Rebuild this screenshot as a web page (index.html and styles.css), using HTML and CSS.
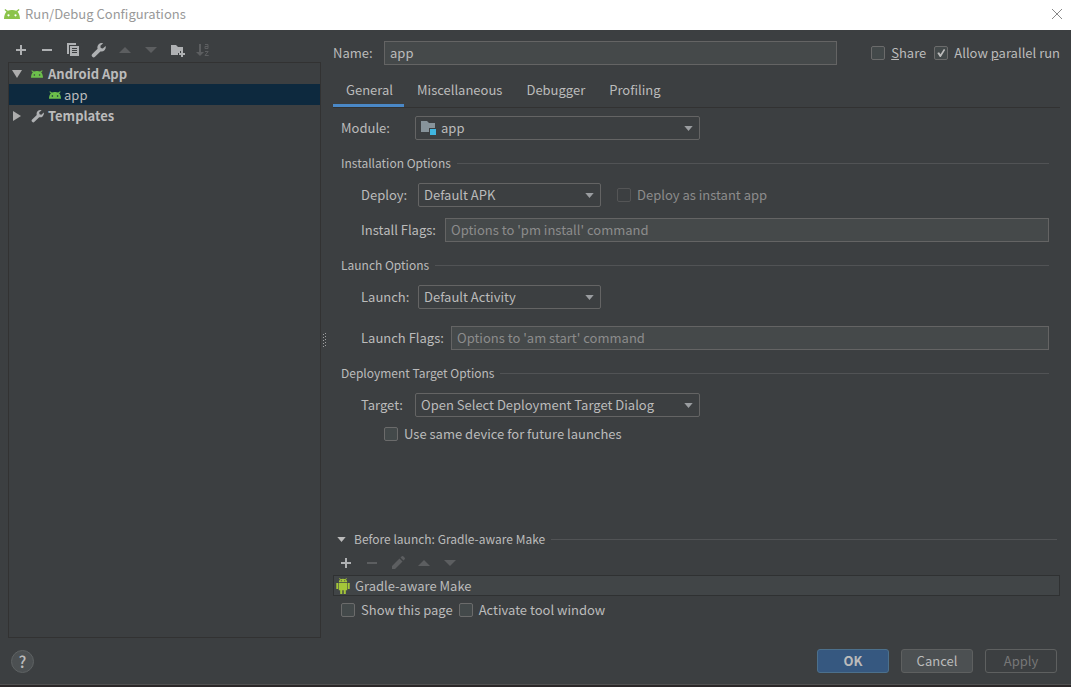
FILE: index.html
```html
<!DOCTYPE html>
<html lang="en">
<head>
<meta charset="utf-8">
<title>Run/Debug Configurations</title>
<link rel="stylesheet" href="styles.css">
</head>
<body>
<svg class="defs" aria-hidden="true">
  <symbol id="head" viewBox="0 0 16 10"><path fill-rule="evenodd" d="M1.200 0l2.600 1.800A9 9 0 0 1 8 1a9 9 0 0 1 4.200.8L14.800 0l.7.900-2 1.900C15 4.200 15.900 6.700 16 10H0c.1-3.300 1-5.800 2.500-7.200L.5.900zM4.500 5.200a1.100 1.100 0 1 0 0 2.200 1.100 1.100 0 0 0 0-2.200zm7 0a1.100 1.100 0 1 0 0 2.200 1.100 1.100 0 0 0 0-2.200z"/></symbol>
  <symbol id="plus" viewBox="0 0 16 16"><path d="M7 3h2v4h4v2H9v4H7V9H3V7h4z"/></symbol>
  <symbol id="minus" viewBox="0 0 16 16"><path d="M3 7h10v2H3z"/></symbol>
  <symbol id="up" viewBox="0 0 16 16"><path d="M8 5l6 6H2z"/></symbol>
  <symbol id="down" viewBox="0 0 16 16"><path d="M8 11L2 5h12z"/></symbol>
  <symbol id="wrench" viewBox="0 0 16 16"><path d="M14.600 4l-2.800 2.500-2.100-.5-.3-2.200L12.200 1.300a4.400 4.400 0 0 0-5.600 5.500L1.300 12a1.900 1.900 0 0 0 0 2.700 1.900 1.900 0 0 0 2.700 0l5.400-5.300A4.400 4.400 0 0 0 14.600 4z"/></symbol>
  <symbol id="caret" viewBox="0 0 10 6"><path d="M0 0h10L5 6z"/></symbol>
</svg>
<div class="dialog">
  <header class="titlebar">
    <svg class="title-icon" aria-hidden="true"><use href="#head"/></svg>
    <h1>Run/Debug Configurations</h1>
    <button class="close" aria-label="Close"><svg viewBox="0 0 12 12" aria-hidden="true"><path d="M1 1l10 10M11 1L1 11"/></svg></button>
  </header>

  <main class="main">
    <nav class="sidebar" aria-label="Configurations">
      <div class="toolbar">
        <button aria-label="Add"><svg><use href="#plus"/></svg></button>
        <button aria-label="Remove"><svg><use href="#minus"/></svg></button>
        <button aria-label="Copy"><svg viewBox="0 0 16 16"><path d="M2 1h9v2H4v9H2z"/><path fill-rule="evenodd" d="M5 4h9v10H5zM7 6v1h5V6zm0 2v1h5V8zm0 2v1h5v-1z"/></svg></button>
        <button aria-label="Edit templates"><svg><use href="#wrench"/></svg></button>
        <button aria-label="Move up" disabled><svg><use href="#up"/></svg></button>
        <button aria-label="Move down" disabled><svg><use href="#down"/></svg></button>
        <button aria-label="New folder"><svg viewBox="0 0 16 16"><path d="M2 3h5l2 2h5v4h-3v2H9v2H2z"/><path d="M12 9h2v2h2v2h-2v2h-2v-2h-2v-2h2z"/></svg></button>
        <button aria-label="Sort" disabled><svg viewBox="0 0 16 16"><path d="M4 2h2v8h3l-4 4-4-4h3z"/><path class="line" d="M10 2.500h3v4h-3v-2h3M10 9.500h3.200l-3.200 4h3.700"/></svg></button>
      </div>
      <ul class="tree">
        <li class="node group"><svg class="twist" viewBox="0 0 10 10"><path d="M0 1h10L5 9z"/></svg><svg class="node-head"><use href="#head"/></svg>Android App</li>
        <li class="node child selected"><svg class="node-head"><use href="#head"/></svg>app</li>
        <li class="node group"><svg class="twist" viewBox="0 0 10 10"><path d="M1 0l8 5-8 5z"/></svg><svg class="node-wrench"><use href="#wrench"/></svg>Templates</li>
      </ul>
    </nav>

    <div class="splitter"><svg viewBox="0 0 4 14" aria-hidden="true"><path d="M2.500 0v14M.5 1v13"/></svg></div>

    <section class="content">
      <div class="name-row">
        <label for="name">Name:</label>
        <input class="field" id="name" type="text" value="app">
        <div class="name-checks">
          <label class="check"><input type="checkbox"><span><u>S</u>hare</span></label>
          <label class="check"><input type="checkbox" checked><span>Allow <u>p</u>arallel run</span></label>
        </div>
      </div>

      <div class="tabs" role="tablist">
        <button role="tab" aria-selected="true">General</button>
        <button role="tab" aria-selected="false">Miscellaneous</button>
        <button role="tab" aria-selected="false">Debugger</button>
        <button role="tab" aria-selected="false">Profiling</button>
      </div>

      <form class="form">
        <div class="row">
          <label class="module-label" for="module">Module:</label>
          <div class="select wide with-icon">
            <select id="module"><option>app</option></select>
            <svg class="folder" viewBox="0 0 16 14" aria-hidden="true"><path d="M0 0h6l2 2h6v5H8v4H0z"/><path class="badge" d="M9 8h6v6H9z"/></svg>
            <svg class="caret" aria-hidden="true"><use href="#caret"/></svg>
          </div>
        </div>

        <h2>Installation Options</h2>
        <div class="row indent">
          <label class="short-label" for="deploy">Deploy:</label>
          <div class="select">
            <select id="deploy"><option>Default APK</option></select>
            <svg class="caret" aria-hidden="true"><use href="#caret"/></svg>
          </div>
          <label class="check instant"><input type="checkbox" disabled><span>Deploy as instant app</span></label>
        </div>
        <div class="row indent">
          <label class="install-label" for="install-flags">Install Flags:</label>
          <input class="field grow" id="install-flags" type="text" placeholder="Options to 'pm install' command">
        </div>

        <h2>Launch Options</h2>
        <div class="row indent">
          <label class="short-label" for="launch">Launch:</label>
          <div class="select">
            <select id="launch"><option>Default Activity</option></select>
            <svg class="caret" aria-hidden="true"><use href="#caret"/></svg>
          </div>
        </div>
        <div class="row indent spaced">
          <label class="launch-label" for="launch-flags">Launch Flags:</label>
          <input class="field grow" id="launch-flags" type="text" placeholder="Options to 'am start' command">
        </div>

        <h2>Deployment Target Options</h2>
        <div class="row indent">
          <label class="target-label" for="target">Target:</label>
          <div class="select wide">
            <select id="target"><option>Open Select Deployment Target Dialog</option></select>
            <svg class="caret" aria-hidden="true"><use href="#caret"/></svg>
          </div>
        </div>
        <label class="check same-device"><input type="checkbox"><span>Use same device for future launches</span></label>
      </form>

      <div class="before">
        <h2><svg class="fold" aria-hidden="true"><use href="#caret"/></svg>Before launch: Gradle-aware Make</h2>
        <div class="toolbar">
          <button aria-label="Add task"><svg><use href="#plus"/></svg></button>
          <button aria-label="Remove task" disabled><svg><use href="#minus"/></svg></button>
          <button aria-label="Edit task" disabled><svg viewBox="0 0 16 16"><path d="M2 11L9.500 3.500l3 3L5 14H2zM10.500 2.500l1.300-1.200a1 1 0 0 1 1.400 0l1.500 1.500a1 1 0 0 1 0 1.400l-1.200 1.300z"/></svg></button>
          <button aria-label="Move task up" disabled><svg><use href="#up"/></svg></button>
          <button aria-label="Move task down" disabled><svg><use href="#down"/></svg></button>
        </div>
        <ul class="tasks">
          <li><svg class="robot" viewBox="0 0 14 16" aria-hidden="true"><path fill-rule="evenodd" d="M3.800 0l.9 1.300a5 5 0 0 1 4.600 0L10.200 0l.6.400-.8 1.400c.8.6 1.200 1.400 1.200 2.400H2.800c0-1 .4-1.800 1.200-2.400L3.200.4zM4.800 2.300v1h1v-1zm3.400 0v1h1v-1z"/><path d="M2.800 5h8.400v7.200H9.800V16H7.700v-3.800H6.300V16H4.200v-3.800H2.800zM.3 5h1.900v6H.3zM11.800 5h1.900v6h-1.900z"/></svg>Gradle-aware Make</li>
        </ul>
        <div class="before-checks">
          <label class="check"><input type="checkbox"><span>Show this page</span></label>
          <label class="check"><input type="checkbox"><span>Activate tool window</span></label>
        </div>
      </div>
    </section>
  </main>

  <footer class="footer">
    <button class="help" aria-label="Help">?</button>
    <button class="btn primary">OK</button>
    <button class="btn">Cancel</button>
    <button class="btn" disabled>Apply</button>
  </footer>
</div>
</body>
</html>
```
FILE: styles.css
```css
* { box-sizing: border-box; }

body {
  margin: 0;
  background: #3c3f41;
  color: #bbbbbb;
  font: 13px/18px "Noto Sans CJK SC", "Noto Sans", sans-serif;
}

button, input, select { font: inherit; color: inherit; }
button { padding: 0; border: 0; background: none; }
ul { margin: 0; padding: 0; list-style: none; }
svg { display: block; flex: none; fill: currentColor; }
.defs { position: absolute; width: 0; height: 0; }

.dialog {
  display: flex;
  flex-direction: column;
  min-height: 100vh;
  border-bottom: 2px solid #2b2728;
}

.titlebar {
  display: flex;
  align-items: center;
  height: 30px;
  padding: 0 8px 2px 4px;
  background: #ffffff;
  color: #999999;
}
.titlebar h1 { flex: 1; margin: 0 0 0 5px; font-size: 13px; font-weight: 400; }
.title-icon { width: 16px; height: 10px; color: #8bc34a; }
.close svg { width: 12px; height: 12px; fill: none; stroke: #888888; }

.main { display: flex; flex: 1; padding: 11px 11px 0 8px; }

.sidebar { display: flex; flex-direction: column; flex: 0 0 313px; }
.toolbar { display: flex; gap: 10px; color: #afb1b3; }
.toolbar svg { width: 16px; height: 16px; }
.toolbar button:disabled { color: #5c5e60; }
.toolbar .line { fill: none; stroke: currentColor; }
.sidebar .toolbar { padding: 1px 5px 4px; }

.tree { flex: 1; border: 1px solid #323232; }
.node { display: flex; align-items: center; height: 21px; padding-left: 3px; }
.group { font-weight: 700; }
.child { padding-left: 40px; color: #bbbbbb; }
.selected { background: #0d293e; }
.twist { width: 10px; height: 10px; margin-right: 9px; color: #adadad; }
.node-head { width: 12px; height: 8px; margin-right: 3px; color: #6cbf4b; }
.group .node-head { margin: 0 5px 0 0; }
.node-wrench { width: 14px; height: 14px; margin-right: 3px; color: #afb1b3; }

.splitter { display: flex; flex: 0 0 12px; align-items: center; padding-left: 2px; }
.splitter svg { width: 4px; height: 14px; fill: none; stroke: #a0a0a0; stroke-dasharray: 1 2; }

.content { display: flex; flex-direction: column; flex: 1; min-width: 0; padding-bottom: 19px; }

.field {
  height: 24px;
  min-width: 0;
  padding: 0 5px 2px;
  border: 1px solid #646464;
  background: #45494a;
}
.field::placeholder { color: #8c8c8c; opacity: 1; }
.grow { flex: 1; }

.name-row { display: flex; align-items: center; }
.name-row > label { flex: 0 0 51px; }
.name-row .field { flex: 1; }
.name-checks { display: flex; gap: 8px; margin-left: 34px; }

.check { display: flex; align-items: center; gap: 6px; }
.check input {
  appearance: none;
  display: grid;
  place-items: center;
  width: 14px;
  height: 14px;
  margin: 0;
  border: 1px solid #6b6b6b;
  border-radius: 2px;
  background: #43494a;
}
.check input:checked::after {
  content: "";
  width: 8px;
  height: 8px;
  background: #bbbbbb;
  clip-path: polygon(0 50%, 22% 40%, 40% 66%, 82% 0, 100% 10%, 44% 100%, 32% 100%);
}
.check input:disabled { border-color: #545556; background: none; }
.check input:disabled + span { color: #8c8c8c; }

.tabs { display: flex; margin-top: 12px; border-bottom: 1px solid #323232; }
.tabs button { height: 30px; padding: 0 11px 2px 13px; border-bottom: 3px solid transparent; }
.tabs button[aria-selected="true"] { border-color: #4a88c7; }

.form { display: flex; flex-direction: column; padding: 8px 11px 0 8px; }
.row { display: flex; align-items: center; gap: 12px; }
.row + .row { margin-top: 11px; }
.row + .spaced { margin-top: 17px; }
.row label { white-space: nowrap; }
.indent { padding-left: 20px; }
.module-label { width: 62px; }
.short-label { width: 45px; }
.target-label { width: 42px; }
.install-label { width: 72px; }
.launch-label { width: 78px; }

h2 { display: flex; align-items: center; gap: 6px; margin: 14px 0 11px; font-size: 12px; font-weight: 400; }
h2::after { content: ""; flex: 1; height: 1px; background: #515355; }

.select { display: grid; align-items: center; flex: 0 0 183px; }
.wide { flex-basis: 285px; }
.select > * { grid-area: 1 / 1; }
.select select {
  appearance: none;
  width: 100%;
  height: 24px;
  padding: 0 24px 0 5px;
  border: 1px solid #646464;
  border-radius: 2px;
  background: #3c3f41;
}
.select.with-icon select { padding-left: 25px; }
.caret { width: 9px; height: 5px; margin-right: 7px; justify-self: end; color: #9a9da0; pointer-events: none; }
.folder { width: 16px; height: 14px; margin-left: 6px; color: #87939a; pointer-events: none; }
.badge { fill: #40b6e0; }

.instant { margin-left: 4px; }
.same-device { align-self: flex-start; margin: 8px 0 0 43px; }

.before { margin-top: auto; }
.before h2 { margin: 0 3px 7px 4px; }
.fold { width: 9px; height: 5px; margin-right: 2px; }
.before .toolbar { padding: 0 5px 4px; }
.tasks { border: 1px solid #2f3132; background: #414547; }
.tasks li { display: flex; align-items: center; gap: 5px; height: 19px; padding-left: 2px; }
.robot { width: 14px; height: 16px; color: #a4c639; }
.before-checks { display: flex; gap: 6px; padding: 5px 8px 0; }

.footer { display: flex; align-items: center; gap: 12px; padding: 11px 14px 11px 11px; border-bottom: 1px solid #515151; }
.help {
  width: 23px;
  height: 23px;
  margin-right: auto;
  border: 1px solid #5e6263;
  border-radius: 50%;
  background: #4c5052;
  font-size: 16px;
  font-weight: 500;
}
.btn {
  width: 72px;
  height: 24px;
  border: 1px solid #5e6060;
  border-radius: 3px;
  background: #4c5052;
}
.btn:disabled { background: none; color: #777777; }
.primary { border-color: #4c708c; background: #365880; font-weight: 700; }
```
